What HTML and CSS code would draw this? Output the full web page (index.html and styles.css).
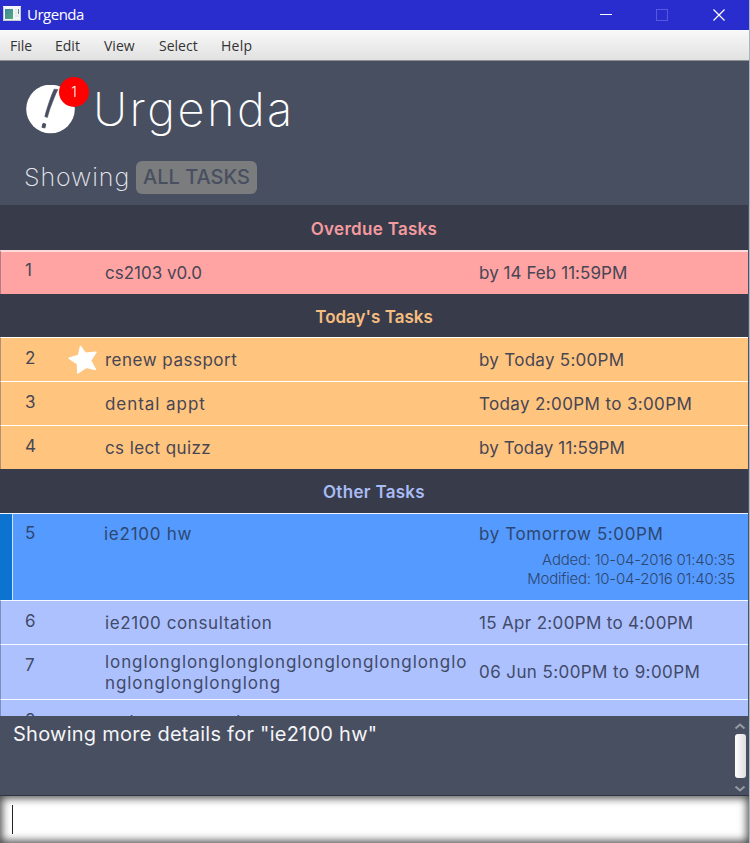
FILE: index.html
```html
<!DOCTYPE html>
<html lang="en">
<head>
<meta charset="utf-8">
<title>Urgenda</title>
<link rel="stylesheet" href="styles.css">
</head>
<body>
<div class="window">
  <header class="titlebar">
    <svg class="app-icon" width="18" height="15" viewBox="0 0 18 15"><defs><linearGradient id="g" x1="0" y1="0" x2="1" y2="1"><stop offset="0" stop-color="#3e83a5"/><stop offset="1" stop-color="#55ad76"/></linearGradient></defs><rect width="18" height="15" fill="#f3f6f7"/><path d="M.5 1v13.5h17V1" fill="none" stroke="#c4cbd2"/><rect x="2" y="3" width="8" height="10" fill="url(#g)"/><path d="M12 4h2M12 7h2M12 10h4" stroke="#d3dbdf"/><path d="M15.500 3v5" stroke="#55967f"/></svg>
    <span class="window-title">Urgenda</span>
    <svg class="controls" width="126" height="14" viewBox="0 0 126 14" fill="none"><path d="M0 6.500h12" stroke="#fff"/><rect x="56.500" y="1.500" width="11" height="11" stroke="#5757df"/><path d="M113.500 1.500l11 11M124.500 1.500l-11 11" stroke="#fff" stroke-width="1.200"/></svg>
  </header>
  <nav class="menu"><span class="m-file">File</span><span class="m-edit">Edit</span><span class="m-view">View</span><span class="m-select">Select</span><span class="m-help">Help</span></nav>
  <section class="hero">
    <div class="brand">
      <div class="logo">
        <svg width="50" height="50" viewBox="0 0 50 50"><circle cx="24.500" cy="24" r="24.300" fill="#fff"/><path d="M28.200 4.200L31.800 4.500Q30 8 27.500 14.500Q23.500 24 21.300 32.500L18.800 31.500Q20 26.500 23 17.500Q26 8.500 28.200 4.200z" fill="#484f60" stroke="#484f60" stroke-width=".6" stroke-linejoin="round"/><path d="M17 38.500l2.700.6-.9 3.900-2.800-.8z" fill="#484f60" stroke="#484f60" stroke-linejoin="round"/></svg>
        <span class="badge">1</span>
      </div>
      <h1>Urgenda</h1>
    </div>
    <div class="filter"><span class="showing">Showing</span><span class="chip">ALL TASKS</span></div>
  </section>
  <main class="tasks">
    <h2 class="overdue-title">Overdue Tasks</h2>
    <div class="row overdue"><span class="num">1</span><span class="icon"></span><span class="name n1">cs2103 v0.0</span><span class="date d1">by 14 Feb 11:59PM</span></div>
    <h2 class="today-title">Today's Tasks</h2>
    <div class="row today"><span class="num">2</span><span class="icon"><svg width="30" height="30" viewBox="0 0 30 30"><path d="M12.500 1.500L17.300 8.300L28 7.200L22.500 15.500L27.500 24.500L18.300 22.300L9.800 28L9.500 19L1 13.200L10.500 10.500Z" fill="#fff" stroke="#fff" stroke-width="1.500" stroke-linejoin="round"/></svg></span><span class="name n2">renew passport</span><span class="date d2">by Today 5:00PM</span></div>
    <div class="row today"><span class="num">3</span><span class="icon"></span><span class="name n3">dental appt</span><span class="date d3">Today 2:00PM to 3:00PM</span></div>
    <div class="row today"><span class="num">4</span><span class="icon"></span><span class="name n4">cs lect quizz</span><span class="date d4">by Today 11:59PM</span></div>
    <h2 class="other-title">Other Tasks</h2>
    <div class="row selected"><span class="num">5</span><span class="icon"></span><span class="name n5">ie2100 hw</span><div class="date"><div class="d5">by Tomorrow 5:00PM</div><div class="meta"><div class="added">Added: 10-04-2016 01:40:35</div><div class="modified">Modified: 10-04-2016 01:40:35</div></div></div></div>
    <div class="row other"><span class="num">6</span><span class="icon"></span><span class="name n6">ie2100 consultation</span><span class="date d6">15 Apr 2:00PM to 4:00PM</span></div>
    <div class="row other tall"><span class="num">7</span><span class="icon"></span><span class="name n7">longlonglonglonglonglonglonglonglonglo<br>nglonglonglonglong</span><span class="date d7">06 Jun 5:00PM to 9:00PM</span></div>
    <div class="row other"><span class="num">8</span><span class="icon"></span><span class="name n8">make some meal</span><span class="date"></span></div>
  </main>
  <section class="feedback">
    <p>Showing more details for "ie2100 hw"</p>
    <div class="scroll"><svg width="12" height="8" viewBox="0 0 12 8"><path d="M1.500 6.500L6 2.500l4.500 4" fill="none" stroke="#969aa3" stroke-width="2"/></svg><i></i><svg width="12" height="8" viewBox="0 0 12 8"><path d="M1.500 1.500L6 5.500l4.500-4" fill="none" stroke="#969aa3" stroke-width="2"/></svg></div>
  </section>
  <div class="command"><span class="caret"></span></div>
</div>
</body>
</html>
```
FILE: styles.css
```css
* { box-sizing: border-box; }
body { margin: 0; font-family: Inter, sans-serif; }
.window { width: 750px; height: 843px; overflow: hidden; display: flex; flex-direction: column; background: #484f60; border-right: 1px solid #a5b7c6; }
.titlebar { height: 30px; flex: none; display: flex; align-items: center; padding: 0 23px 0 3px; background: #292dcd; color: #fff; }
.app-icon { margin-top: -3px; }
.window-title { margin: -2px 0 0 6px; font: 15px "Open Sans", sans-serif; flex: 1; letter-spacing: -.5px; }
.menu { height: 31px; flex: none; display: flex; align-items: center; padding-left: 10px; background: linear-gradient(#f9f9f9, #e1e1e1); border-bottom: 1px solid #8e9094; font: 14px "Open Sans", sans-serif; color: #333; }
.menu span { white-space: nowrap; }
.m-file { width: 45px; } .m-edit { width: 49px; } .m-view { width: 55px; } .m-select { width: 62px; } .m-help { letter-spacing: .3px; }
.hero { height: 144px; flex: none; padding-left: 24px; }
.brand { display: flex; height: 100px; padding-top: 24px; }
.logo { position: relative; width: 69px; padding-left: 2px; }
.badge { position: absolute; left: 35px; top: -8px; width: 30px; height: 30px; border-radius: 50%; background: #ff0000; color: #fff; font-size: 14px; line-height: 30px; text-align: center; font-weight: 300; }
h1 { margin: -4px 0 0; font-size: 47px; line-height: 56px; font-weight: 200; color: #fff; letter-spacing: 2.400px; }
.filter { display: flex; height: 33px; line-height: 33px; color: #e6e8ef; }
.showing { width: 112px; font-size: 25px; font-weight: 200; letter-spacing: .9px; white-space: nowrap; }
.chip { width: 121px; height: 33px; border-radius: 6px; background: #7b7c7e; color: #484f60; font-size: 20px; font-weight: 500; text-align: center; white-space: nowrap; }
.tasks { height: 511px; flex: none; overflow: hidden; border-right: 1px solid #4b5365; }
h2 { margin: 0; height: 44px; background: #383b49; font-size: 17px; font-weight: 600; line-height: 46px; text-align: center; }
.overdue-title { height: 45px; line-height: 48px; color: #f49ba0; letter-spacing: .3px; }
.today-title { height: 43px; color: #f5be80; }
.other-title { color: #a9bbf5; letter-spacing: .3px; }
.row { height: 44px; display: grid; grid-template-columns: 43px 37px 374px 1fr; align-items: center; padding: 1px 0 0 24px; border-top: 1px solid #fff; border-left: 1px solid rgba(60, 65, 90, .4); font-size: 17px; line-height: 21px; color: #474654; white-space: nowrap; }
.num { align-self: start; padding-top: 9px; }
.icon { height: 30px; }
.overdue { background: #ffa3a3; border-top: 2px solid #fbdadb; padding-top: 0; }
.overdue .num { padding-top: 8px; }
.today { background: #ffc47e; }
.other { background: #adc1ff; border-top-color: #f6f9ff; color: #414a68; }
.tall { height: 55px; }
.selected { height: 87px; align-items: start; padding: 10px 0 0 25px; border-left: 0; background: #559aff; border-top-color: #f0f6ff; box-shadow: inset 12px 0 #0c73d0, inset 13px 0 #cce0ff; color: #2d4770; }
.selected .num { padding-top: 0; margin-top: -1px; }
.selected .name { margin-left: -1px; }
.n2 { letter-spacing: .5px; }
.n3 { letter-spacing: .95px; }
.n4 { letter-spacing: .4px; }
.n5 { letter-spacing: .75px; }
.n6 { letter-spacing: .6px; }
.n7 { letter-spacing: .92px; }
.d1 { letter-spacing: .06px; }
.d2 { letter-spacing: .28px; }
.d3 { letter-spacing: .37px; }
.d4 { letter-spacing: .12px; }
.d5 { letter-spacing: .6px; }
.d6 { letter-spacing: .33px; }
.d7 { letter-spacing: .41px; }
.meta { padding: 6px 13px 0 0; text-align: right; font-size: 15px; line-height: 18.500px; font-weight: 300; letter-spacing: -.24px; }
.feedback { height: 79px; flex: none; display: flex; justify-content: space-between; padding: 0 3px 0 13px; color: #f4f5f8; }
.feedback p { margin: 5px 0; font-size: 20px; line-height: 26px; letter-spacing: .25px; }
.scroll { width: 12px; display: flex; flex-direction: column; align-items: center; padding-top: 6px; }
.scroll i { width: 11px; height: 44px; margin: 4px 0 7px; border-radius: 3px; background: linear-gradient(90deg, #fff, #dedede); flex: none; }
.scroll svg { flex: none; }
.command { height: 48px; flex: none; padding: 9px 12px; background: #fff; border-top: 1px solid #303441; box-shadow: inset 0 0 8px 2px #444; }
.caret { display: block; width: 1px; height: 29px; background: #222; }
```
